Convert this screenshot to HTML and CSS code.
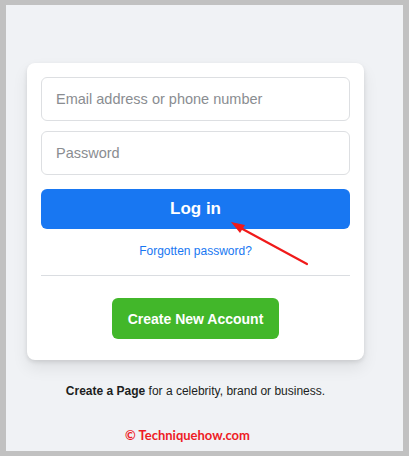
FILE: index.html
```html
<!DOCTYPE html>
<html lang="en">

<head>
    <meta charset="UTF-8">
    <meta name="viewport" content="width=device-width, initial-scale=1.0">
    <title>Log in</title>
    <link rel="stylesheet" href="styles.css">
</head>

<body>
    <div class="pagina">
        <div class="coluna">
            <div class="cartao">
                <input class="campo" type="text" placeholder="Email address or phone number">
                <input class="campo" type="password" placeholder="Password">
                <button class="btn-entrar">Log in</button>
                <a class="esqueceu" href="#">Forgotten password?</a>
                <div class="divisor"></div>
                <div class="linha-criar">
                    <button class="btn-criar">Create New Account</button>
                </div>

                <!-- seta vermelha -->
                <svg class="seta" width="90" height="50" viewBox="0 0 90 50">
                    <line x1="84" y1="46" x2="14" y2="8" stroke="#f01a1a" stroke-width="2.2" stroke-linecap="round" />
                    <polygon points="8,4 22,7 17,15" fill="#f01a1a" />
                </svg>
            </div>

            <p class="criar-pagina"><b>Create a Page</b> for a celebrity, brand or business.</p>
        </div>
        <div class="marca">© Techniquehow.com</div>
    </div>
</body>

</html>
```

FILE: styles.css
```css
body {
    margin: 0;
    padding: 5px 6px;
    background-color: #c1c1c1;
    font-family: 'Liberation Sans', Arial, sans-serif;
}

.pagina {
    background-color: #f0f2f5;
    height: 446px;
    box-sizing: border-box;
    padding-top: 58px;
    padding-left: 21px;
}

.coluna {
    width: 337px;
}

.cartao {
    position: relative;
    background-color: #fff;
    border-radius: 8px;
    box-shadow: 0 2px 4px rgba(0, 0, 0, 0.1), 0 8px 16px rgba(0, 0, 0, 0.08);
    padding: 14px 14px 21px;
    display: flex;
    flex-direction: column;
}

.campo {
    height: 44px;
    box-sizing: border-box;
    border: 1px solid #dddfe2;
    border-radius: 6px;
    padding: 0 14px;
    font-family: inherit;
    font-size: 14.5px;
    color: #1c1e21;
    margin-bottom: 10px;
    outline: none;
}

.campo::placeholder {
    color: #8a8d91;
}

.btn-entrar {
    margin-top: 4px;
    height: 40px;
    border: none;
    border-radius: 6px;
    background-color: #1877f2;
    color: #fff;
    font-family: inherit;
    font-size: 17px;
    font-weight: bold;
    cursor: pointer;
}

.esqueceu {
    margin-top: 15px;
    text-align: center;
    color: #1877f2;
    font-size: 12px;
    text-decoration: none;
}

.divisor {
    margin-top: 17px;
    border-top: 1px solid #dadde1;
}

.linha-criar {
    display: flex;
    justify-content: center;
    margin-top: 22px;
}

.btn-criar {
    height: 41px;
    width: 167px;
    padding: 0;
    white-space: nowrap;
    border: none;
    border-radius: 6px;
    background-color: #42b72a;
    color: #fff;
    font-family: inherit;
    font-size: 14px;
    font-weight: bold;
    cursor: pointer;
}

.seta {
    position: absolute;
    left: 196px;
    top: 155px;
}

.criar-pagina {
    margin: 24px 0 0;
    text-align: center;
    font-size: 12px;
    color: #1c1e21;
}

.marca {
    margin-top: 29px;
    padding-left: 98px;
    color: #ee1c25;
    font-family: Lato, sans-serif;
    font-weight: bold;
    font-size: 13px;
}
```
